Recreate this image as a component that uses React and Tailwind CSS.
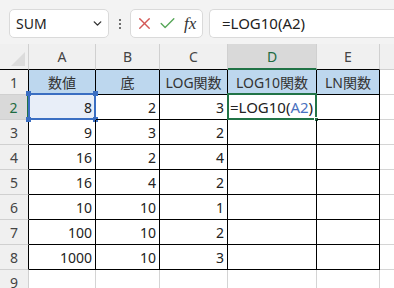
import { ChevronDown, X, Check } from "lucide-react";

const cols = [
  { key: "A", w: "w-[67px]" },
  { key: "B", w: "w-[64px]" },
  { key: "C", w: "w-[68px]" },
  { key: "D", w: "w-[89px]" },
  { key: "E", w: "w-[63px]" },
  { key: "F", w: "w-[40px]" },
];

const headers = ["数値", "底", "LOG関数", "LOG10関数", "LN関数"];

const data = [
  [8, 2, 3],
  [9, 3, 2],
  [16, 2, 4],
  [16, 4, 2],
  [10, 10, 1],
  [100, 10, 2],
  [1000, 10, 3],
];

const font = { fontFamily: '"Noto Sans", "Noto Sans CJK JP", sans-serif' };

function Toolbar() {
  return (
    <div className="h-[44px] bg-[#f3f3f3] flex items-start pt-[9px] pl-[9px]">
      <div className="w-[100px] h-[29px] bg-white border border-[#dadada] rounded-[5px] flex items-center justify-between pl-[6px] pr-[4px] text-[14px] text-[#222]">
        <span>SUM</span>
        <ChevronDown size={13} strokeWidth={2.6} className="text-[#333]" />
      </div>
      <div className="w-[21px] h-[29px] flex flex-col items-center justify-center gap-[2px]">
        <span className="w-[2px] h-[2px] bg-[#444] rounded-full" />
        <span className="w-[2px] h-[2px] bg-[#444] rounded-full" />
        <span className="w-[2px] h-[2px] bg-[#444] rounded-full" />
      </div>
      <div className="w-[73px] h-[29px] bg-white border border-[#dadada] rounded-[5px] flex items-center pl-[4px] gap-[4px]">
        <X size={19} strokeWidth={1.7} className="text-[#d35856]" />
        <Check size={19} strokeWidth={1.7} className="text-[#55a657]" />
        <span className="text-[17px] italic text-[#333] ml-[3px]" style={{ fontFamily: '"Liberation Serif", serif' }}>
          fx
        </span>
      </div>
      <div className="ml-[6px] flex-1 h-[29px] bg-white border border-[#dadada] border-r-0 rounded-l-[5px] flex items-center pl-[12px] text-[15px] text-[#222]">
        =LOG10(A2)
      </div>
    </div>
  );
}

function ColumnHeader() {
  return (
    <div className="flex h-[26px]">
      <div className="w-[29px] shrink-0 bg-[#f0f0f0] border-r border-[#d0d0d0] border-b border-b-black relative">
        <div className="absolute right-[3px] bottom-[3px] w-0 h-0 border-l-[14px] border-l-transparent border-b-[14px] border-b-[#dcdcdc]" />
      </div>
      {cols.map((c) => {
        const active = c.key === "D";
        const inTable = c.key !== "F";
        return (
          <div
            key={c.key}
            className={`${c.w} shrink-0 flex items-center justify-center text-[14px] border-r border-[#d0d0d0] ${
              active
                ? "bg-[#d9d9d9] text-[#1e6b41] border-b-2 border-b-[#217346]"
                : `bg-[#f0f0f0] text-[#444] border-b ${inTable ? "border-b-black" : "border-b-[#d0d0d0]"}`
            }`}
          >
            {inTable ? c.key : ""}
          </div>
        );
      })}
    </div>
  );
}

function Row({ n, children }) {
  const active = n === 2;
  const inTable = n <= 8;
  return (
    <div className="flex h-[25px]">
      <div
        className={`w-[29px] shrink-0 flex items-center justify-center text-[14px] border-b border-[#d0d0d0] ${
          active
            ? "bg-[#d9d9d9] text-[#1e6b41] border-r-2 border-r-[#217346]"
            : `bg-[#f0f0f0] text-[#444] border-r ${inTable ? "border-r-black" : "border-r-[#d0d0d0]"}`
        }`}
      >
        {n}
      </div>
      {children}
    </div>
  );
}

function Cell({ col, inTable, className = "", children }) {
  return (
    <div
      className={`${col.w} shrink-0 relative flex items-center text-[14px] text-[#222] border-r border-b ${
        inTable ? "border-black" : "border-[#d4d4d4]"
      } ${className}`}
    >
      {children}
    </div>
  );
}

export default function App() {
  return (
    <div className="w-[394px] h-[288px] overflow-hidden bg-white" style={font}>
      <Toolbar />
      <ColumnHeader />
      <Row n={1}>
        {cols.map((c, i) =>
          i < 5 ? (
            <Cell key={c.key} col={c} inTable className="justify-center bg-[#bdd7ee] text-[#333]">
              {headers[i]}
            </Cell>
          ) : (
            <Cell key={c.key} col={c} />
          )
        )}
      </Row>
      {data.map((r, idx) => {
        const n = idx + 2;
        return (
          <Row key={n} n={n}>
            {cols.map((c, i) => {
              if (i >= 5) return <Cell key={c.key} col={c} />;
              if (n === 2 && i === 0) {
                return (
                  <Cell key={c.key} col={c} inTable className="justify-end pr-[3px] bg-[#e8eef8]">
                    <div className="absolute -left-[1px] -top-[2px] -right-[1px] -bottom-[1px] border-2 border-[#3a6ec2] pointer-events-none" />
                    <span className="absolute -left-[3px] -top-[4px] w-[5px] h-[5px] bg-[#3a6ec2]" />
                    <span className="absolute -right-[3px] -top-[4px] w-[5px] h-[5px] bg-[#3a6ec2]" />
                    <span className="absolute -left-[3px] -bottom-[3px] w-[5px] h-[5px] bg-[#3a6ec2]" />
                    <span className="absolute -right-[3px] -bottom-[3px] w-[5px] h-[5px] bg-[#3a6ec2]" />
                    <span className="relative">{r[0]}</span>
                  </Cell>
                );
              }
              if (n === 2 && i === 3) {
                return (
                  <Cell key={c.key} col={c} inTable className="pl-[2px] text-[15px] whitespace-nowrap">
                    <div className="absolute -left-[1px] -top-[2px] -right-[1px] -bottom-[1px] border-2 border-[#217346]" />
                    <span className="absolute -right-[3px] -bottom-[3px] w-[5px] h-[5px] bg-[#217346] border border-white" />
                    <span className="relative">
                      =LOG10(<span className="text-[#4a72c0]">A2</span>)
                    </span>
                  </Cell>
                );
              }
              return (
                <Cell key={c.key} col={c} inTable className="justify-end pr-[3px]">
                  {i < 3 ? r[i] : ""}
                </Cell>
              );
            })}
          </Row>
        );
      })}
      <Row n={9}>
        {cols.map((c) => (
          <Cell key={c.key} col={c} />
        ))}
      </Row>
    </div>
  );
}
